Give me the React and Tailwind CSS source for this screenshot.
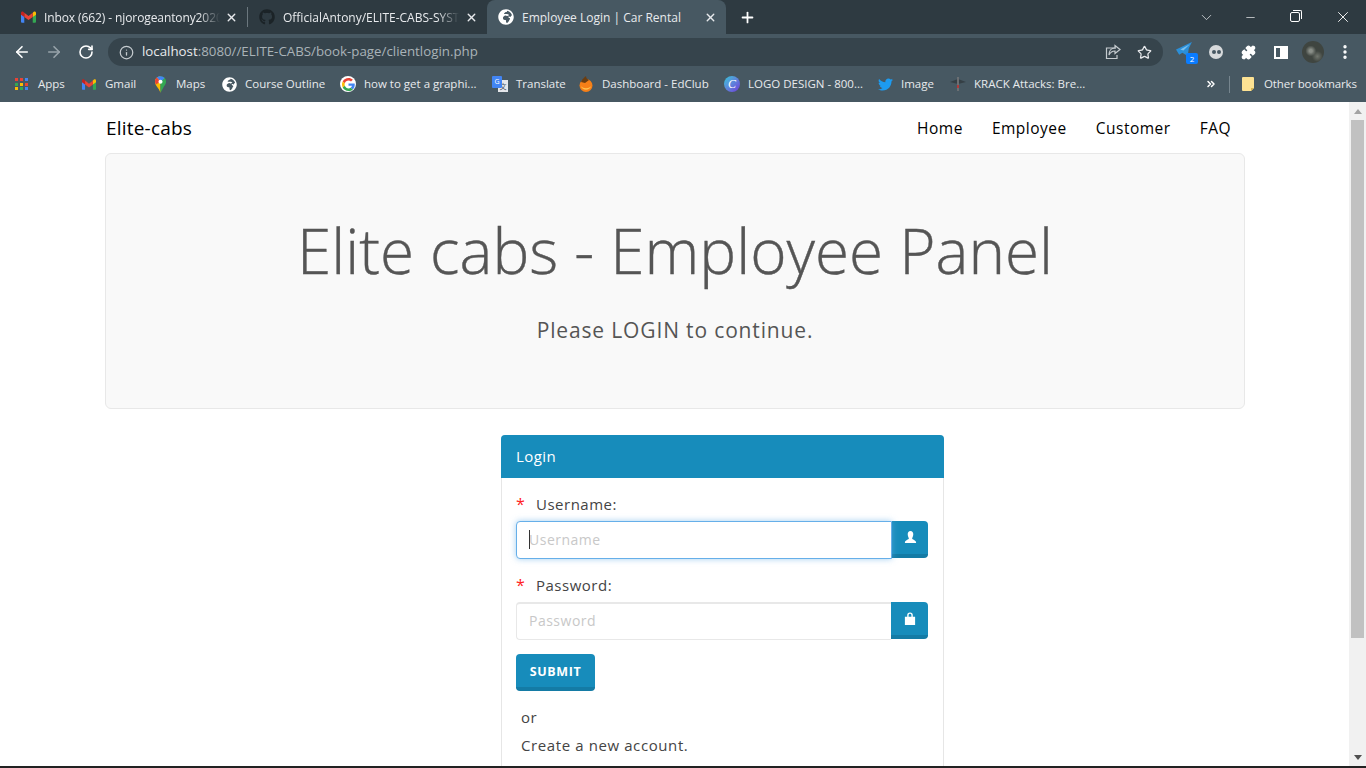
import React from 'react';
import { ArrowLeft, ArrowRight, RotateCw, Info, Star, X, Plus, ChevronDown, Minus, Puzzle, MoreVertical, ChevronsRight } from 'lucide-react';
import { FaGithub, FaTwitter, FaGlobeAfrica } from 'react-icons/fa';

const GmailIcon = ({ className }) => (
  <svg viewBox="0 0 16 12" className={className}>
    <path d="M0 2v9a1 1 0 0 0 1 1h2.5V5.500z" fill="#4285f4" />
    <path d="M16 2v9a1 1 0 0 1-1 1h-2.500V5.500z" fill="#34a853" />
    <path d="M12.500 1.500V6L16 3.500V1.600C16 .3 14.600-.4 13.600.4z" fill="#fbbc04" />
    <path d="M3.500 6V1.500L8 5l4.500-3.500V6L8 9.300z" fill="#ea4335" />
    <path d="M0 1.600v1.900L3.500 6V1.500L2.400.4C1.400-.4 0 .3 0 1.600z" fill="#c5221f" />
  </svg>
);

const GoogleIcon = () => (
  <span className="w-4 h-4 rounded-full bg-white flex items-center justify-center">
    <svg viewBox="0 0 48 48" className="w-[13px] h-[13px]">
      <path fill="#ea4335" d="M24 9.500c3.500 0 6.700 1.200 9.200 3.600l6.900-6.900C35.900 2.400 30.400 0 24 0 14.600 0 6.500 5.400 2.600 13.200l8 6.200C12.500 13.700 17.800 9.500 24 9.500z" />
      <path fill="#4285f4" d="M47 24.500c0-1.600-.1-3.100-.4-4.500H24v9h13c-.6 3-2.300 5.500-4.800 7.200l7.700 6C44.400 37.900 47 31.800 47 24.500z" />
      <path fill="#fbbc05" d="M10.500 28.600c-.5-1.400-.8-3-.8-4.600s.3-3.200.8-4.600l-8-6.200C.9 16.500 0 20.100 0 24s.9 7.500 2.600 10.800z" />
      <path fill="#34a853" d="M24 48c6.500 0 11.900-2.100 15.900-5.800l-7.700-6c-2.200 1.500-4.900 2.300-8.200 2.300-6.200 0-11.500-4.200-13.400-9.900l-8 6.200C6.500 42.600 14.600 48 24 48z" />
    </svg>
  </span>
);

const AppsIcon = () => {
  const colors = ['#ea4335', '#ea4335', '#4285f4', '#34a853', '#fbbc04', '#ea4335', '#fbbc04', '#34a853', '#4285f4'];
  return (
    <span className="grid grid-cols-3 gap-[1.5px] w-[13px]">
      {colors.map((c, i) => <span key={i} className="w-[3px] h-[3px]" style={{ backgroundColor: c }} />)}
    </span>
  );
};

const MapsIcon = () => (
  <svg viewBox="0 0 14 18" className="w-[13px] h-[17px]">
    <path d="M7 0a6 6 0 0 0-6 6c0 4 4 6 6 12z" fill="#fbbc04" />
    <path d="M7 0a6 6 0 0 1 6 6c0 1.500-.7 3-2 4.500L7 18z" fill="#34a853" />
    <path d="M3 1.400A6 6 0 0 1 7 0c2 0 3.500 1 4.500 2L7 6z" fill="#4285f4" />
    <path d="M1 6c0-1.800.8-3.500 2-4.600L7 6l-5 3z" fill="#ea4335" />
    <circle cx="7" cy="6" r="2.200" fill="#fff" />
  </svg>
);

const TranslateIcon = () => (
  <span className="relative w-4 h-4 block">
    <span className="absolute right-0 bottom-0 w-[10px] h-[12px] bg-gray-200 text-[7px] leading-[12px] text-center text-gray-600 font-['Noto_Sans_CJK_SC',sans-serif]">文</span>
    <span className="absolute left-0 top-0 w-[10px] h-[12px] rounded-[1px] bg-[#4285f4] text-[7px] leading-[12px] text-center text-white">G</span>
  </span>
);

const EdClubIcon = () => (
  <svg viewBox="0 0 16 16" className="w-4 h-4">
    <circle cx="8" cy="9.500" r="6.500" fill="#f57f17" />
    <path d="M3 6c1-3 3-4 5-6 0 2 1 3 3 4L7 7z" fill="#6b3d10" />
    <path d="M3 10c2 3 8 3 10 0-1 5-9 5-10 0z" fill="#ffc04d" />
  </svg>
);

const CanvaIcon = () => (
  <span className="w-4 h-4 rounded-full bg-gradient-to-br from-[#22c6d8] to-[#6a2fd8] flex items-center justify-center text-white text-[12px] italic leading-none font-['Liberation_Serif',serif]">C</span>
);

const KrackIcon = () => (
  <svg viewBox="0 0 16 16" className="w-4 h-4">
    <path d="M0 6l8-3 8 3-8 2z" fill="#353f45" />
    <rect x="7" y="1" width="2" height="14" fill="#6b6f73" />
    <rect x="7" y="9" width="2" height="3" fill="#b03a3a" />
  </svg>
);

const FolderIcon = () => (
  <svg viewBox="0 0 12 14" className="w-3 h-[14px]">
    <path d="M1 0h10a1 1 0 0 1 1 1v10l-3 3H1a1 1 0 0 1-1-1V1a1 1 0 0 1 1-1z" fill="#fde293" />
    <path d="M9 14v-3h3z" fill="#d9b650" />
  </svg>
);

// fixed widths so each bookmark lands where it does in the bar
const BOOKMARKS = [
  { label: 'Apps', icon: <AppsIcon />, cls: 'w-[67px]', gap: 'gap-[10px]' },
  { label: 'Gmail', icon: <GmailIcon className="w-[14px] h-[11px]" />, cls: 'w-[72px]', gap: 'gap-[9px]' },
  { label: 'Maps', icon: <MapsIcon />, cls: 'w-[68px]', gap: 'gap-[9px]' },
  { label: 'Course Outline', icon: <FaGlobeAfrica className="w-[15px] h-[15px] text-white" />, cls: 'w-[118px]', gap: 'gap-[8px]' },
  { label: 'how to get a graphi...', icon: <GoogleIcon />, cls: 'w-[152px]', gap: 'gap-[8px]' },
  { label: 'Translate', icon: <TranslateIcon />, cls: 'w-[86px]', gap: 'gap-[8px]' },
  { label: 'Dashboard - EdClub', icon: <EdClubIcon />, cls: 'w-[146px]', gap: 'gap-[8px]' },
  { label: 'LOGO DESIGN - 800...', icon: <CanvaIcon />, cls: 'w-[154px]', gap: 'gap-[8px]' },
  { label: 'Image', icon: <FaTwitter className="w-[15px] h-[15px] text-[#1d9bf0]" />, cls: 'w-[72px]', gap: 'gap-[8px]' },
  { label: 'KRACK Attacks: Bre...', icon: <KrackIcon />, cls: 'w-[258px]', gap: 'gap-[8px]' },
];

function Tab({ icon, title, active, cls, fade }) {
  return (
    <div className={`relative h-[34px] shrink-0 flex items-center ${cls} ${active ? 'bg-[#475862] rounded-t-lg' : ''}`}>
      {icon}
      <span className={`overflow-hidden whitespace-nowrap text-[12px] pt-px text-[#e8eaed] ${fade}`}>{title}</span>
      <X className="absolute right-[9px] top-[11px] w-[13px] h-[13px] text-[#e8eaed]" strokeWidth={2.5} />
    </div>
  );
}

function BrowserChrome() {
  return (
    <div className="shrink-0 font-['Open_Sans',sans-serif]">
      {/* Tab strip */}
      <div className="h-[34px] bg-[#2e3a41] flex items-center">
        <Tab
          cls="w-[247px] pl-[21px] gap-[8px]"
          fade="w-[176px] tracking-[-0.1px] [mask-image:linear-gradient(to_right,black_88%,transparent)]"
          title="Inbox (662) - njorogeantony20200"
          icon={<GmailIcon className="w-[15px] h-[12px] shrink-0" />}
        />
        <div className="w-px h-5 bg-[#6b777e]" />
        <Tab
          cls="w-[239px] pl-[11px] gap-[8px]"
          fade="w-[176px] [mask-image:linear-gradient(to_right,black_88%,transparent)]"
          title="OfficialAntony/ELITE-CABS-SYSTEM"
          icon={<FaGithub className="w-4 h-4 shrink-0 text-[#1b2327]" />}
        />
        <Tab
          active
          cls="w-[239px] pl-[11px] gap-[8px]"
          fade=""
          title="Employee Login | Car Rental"
          icon={<FaGlobeAfrica className="w-4 h-4 shrink-0 text-white" />}
        />
        <Plus className="w-[17px] h-[17px] text-white ml-[13px]" strokeWidth={2.5} />
        <div className="flex-1" />
        <ChevronDown className="w-[17px] h-[17px] text-[#d5d9dc] mr-[29px]" strokeWidth={1.2} />
        <Minus className="w-[13px] h-[13px] text-white mr-[33px]" strokeWidth={1.2} />
        <span className="relative block w-[10px] h-[10px] border border-white rounded-[2px] mr-[34px]">
          <span className="absolute -right-[3px] -top-[3px] w-[9px] h-[9px] border-t border-r border-white rounded-tr-[2px]" />
        </span>
        <X className="w-[18px] h-[18px] text-white mr-[14px]" strokeWidth={1.2} />
      </div>

      {/* Toolbar */}
      <div className="h-[36px] bg-[#475862] flex items-center">
        <ArrowLeft className="w-[18px] h-[18px] text-white ml-[13px]" strokeWidth={2.2} />
        <ArrowRight className="w-[18px] h-[18px] text-[#98a3aa] ml-[14px]" strokeWidth={2.2} />
        <RotateCw className="w-[16px] h-[16px] text-white ml-[15px]" strokeWidth={2.4} />
        <div className="ml-[14px] w-[1055px] h-[28px] rounded-full bg-[#36444c] flex items-center pl-[11px]">
          <Info className="w-[15px] h-[15px] text-[#c5cbcf]" strokeWidth={2} />
          <span className="ml-[8px] text-[13.3px] text-[#e8eaed] whitespace-nowrap">
            localhost<span className="text-[#aab3b8]">:8080//ELITE-CABS/book-page/clientlogin.php</span>
          </span>
          <div className="flex-1" />
          <svg viewBox="0 0 16 16" className="w-4 h-4 mr-[16px] fill-none stroke-[#c5cbcf] stroke-[1.2]">
            <path d="M11 4H1.500v10.500h10.500V11" />
            <path d="M15 5.500L10 1.500v2.500C6 4 4 7 4 11c1.500-3 3.500-4 6-4v2.500z" />
          </svg>
          <Star className="w-[15px] h-[15px] text-[#e8eaed] mr-[11px]" strokeWidth={2} />
        </div>
        {/* Extensions */}
        <div className="relative ml-[13px] w-[22px] h-[20px]">
          <svg viewBox="0 0 16 14" className="w-[17px] h-[15px]">
            <path d="M0 7l15-7-3 6-1 7-5-3-3 2z" fill="#2b8fd8" />
            <path d="M4 7l9-5-6 6z" fill="#7cc0ee" />
          </svg>
          <span className="absolute right-0 bottom-[-2px] w-[12px] h-[11px] rounded-[2px] bg-[#0a7cff] text-white text-[8px] leading-[11px] text-center">2</span>
        </div>
        <span className="ml-[11px] w-[14px] h-[14px] rounded-full bg-[#d7dadc] flex items-center justify-center gap-[1px]">
          <span className="w-[4px] h-[4px] rounded-full bg-[#475862]" />
          <span className="w-[4px] h-[4px] rounded-full bg-[#475862]" />
        </span>
        <Puzzle className="ml-[18px] w-[15px] h-[15px] text-white fill-white" />
        <span className="ml-[18px] w-[14px] h-[13px] border-2 border-white flex justify-end">
          <span className="w-[6px] h-full bg-white" />
        </span>
        <span className="ml-[14px] w-[22px] h-[22px] rounded-full bg-[#3f4540] bg-[radial-gradient(circle_at_40%_45%,#8a8f88_0,#8a8f88_8%,transparent_30%),radial-gradient(circle_at_70%_70%,#72776f_0,transparent_25%)]" />
        <MoreVertical className="ml-[12px] w-[18px] h-[18px] text-white" strokeWidth={2.5} />
      </div>

      {/* Bookmarks */}
      <div className="h-[32px] pb-[4px] bg-[#475862] flex items-center pl-[15px] text-[11.5px] text-[#e8eaed]">
        {BOOKMARKS.map((b) => (
          <div key={b.label} className={`flex items-center shrink-0 whitespace-nowrap ${b.cls} ${b.gap}`}>
            {b.icon}
            <span>{b.label}</span>
          </div>
        ))}
        <ChevronsRight className="w-[12px] h-[12px] text-white ml-[-3px]" strokeWidth={3} />
        <div className="w-px h-[17px] bg-[#76858e] ml-[12px]" />
        <div className="ml-[12px]"><FolderIcon /></div>
        <span className="ml-[10px] whitespace-nowrap tracking-[-0.1px]">Other bookmarks</span>
      </div>
    </div>
  );
}

function Scrollbar() {
  return (
    <div className="w-[17px] shrink-0 bg-[#f1f1f1] flex flex-col items-center">
      <div className="h-[18px] flex items-center justify-center">
        <div className="w-0 h-0 border-x-[4px] border-x-transparent border-b-[5px] border-b-[#a3a3a3]" />
      </div>
      <div className="w-[13px] h-[518px] bg-[#c1c1c1]" />
      <div className="flex-1" />
      <div className="h-[17px] flex items-center justify-center">
        <div className="w-0 h-0 border-x-[4px] border-x-transparent border-t-[5px] border-t-[#505050]" />
      </div>
    </div>
  );
}

function LoginField({ label, placeholder, icon, focused }) {
  return (
    <div className="mb-[15px]">
      <div className="h-[22px] flex items-center text-[15px] tracking-[0.5px] text-[#444]">
        <span className="text-[#f22] w-[20px] text-[16px]">*</span>
        {label}:
      </div>
      <div className="mt-[6px] flex h-[38px]">
        <div className={`relative flex-1 flex items-center pl-[12px] pb-[2px] bg-white rounded-l-[4px] text-[14px] tracking-[0.5px] text-[#c8c8c8] ${focused ? 'border border-[#66afe9] shadow-[0_0_6px_rgba(102,175,233,0.6)]' : 'border border-[#e8e8e8] border-r-0 border-t-2'}`}>
          {focused && <span className="absolute left-[12px] top-[8px] w-px h-[19px] bg-[#333]" />}
          {placeholder}
        </div>
        <div className={`h-[37px] flex items-center justify-center rounded-r-[4px] bg-[#178cbb] border-b-[4px] border-b-[#147ba5] text-white ${focused ? 'w-[36px]' : 'w-[37px]'}`}>
          {icon}
        </div>
      </div>
    </div>
  );
}

export default function App() {
  return (
    <div className="h-screen overflow-hidden flex flex-col bg-white">
      <BrowserChrome />
      <div className="flex-1 min-h-0 flex">
        <div className="flex-1 min-w-0 overflow-hidden font-['Open_Sans',sans-serif]">
          <div className="w-[1140px] ml-[105px]">
            {/* Navbar */}
            <nav className="h-[51px] pt-[2px] flex items-center justify-between text-black">
              <span className="text-[19px] tracking-[0.2px] ml-px">Elite-cabs</span>
              <ul className="flex gap-[29px] mr-[14px] text-[15.5px] tracking-[0.5px]">
                <li>Home</li>
                <li>Employee</li>
                <li>Customer</li>
                <li>FAQ</li>
              </ul>
            </nav>

            {/* Jumbotron */}
            <section className="h-[256px] bg-[#f9f9f9] border border-[#e8e8e8] rounded-[6px] flex flex-col items-center text-[#555]">
              <h1 className="mt-[52px] text-[62px] leading-[88px] font-light [-webkit-text-stroke:0.4px_#555]">Elite cabs - Employee Panel</h1>
              <p className="mt-[21px] text-[21px] leading-[30px] tracking-[0.85px]">Please LOGIN to continue.</p>
            </section>

            {/* Login panel */}
            <div className="w-[443px] mt-[26px] ml-[396px] h-[400px] border border-[#e6e6e6] rounded-t-[4px]">
              <div className="h-[43px] bg-[#178cbb] -mx-px -mt-px rounded-t-[4px] flex items-center pl-[15px] text-white text-[15px] tracking-[0.4px]">
                Login
              </div>
              <div className="pt-[15px] pl-[14px] pr-[15px]">
                <LoginField
                  focused
                  label="Username"
                  placeholder="Username"
                  icon={
                    <svg viewBox="0 0 14 14" className="w-[13px] h-[13px] fill-white">
                      <path d="M7 0c2 0 3 1.500 3 3.500S9 7 8.700 8c0 1 4.300 2 4.300 4v1H1v-1c0-2 4.300-3 4.300-4C5 7 4 5.500 4 3.500S5 0 7 0z" />
                    </svg>
                  }
                />
                <div className="-mb-px">
                  <LoginField
                    label="Password"
                    placeholder="Password"
                    icon={
                      <svg viewBox="0 0 12 14" className="w-[12px] h-[13px] fill-white">
                        <path d="M3 5V3.500a3 3 0 0 1 6 0V5h2.500v9H.500V5zm1.500 0h3V3.500a1.500 1.500 0 0 0-3 0z" />
                      </svg>
                    }
                  />
                </div>
                <button className="w-[79px] h-[37px] pt-[4px] rounded-[4px] bg-[#178cbb] border-b-[4px] border-b-[#147ba5] text-white text-[12.5px] font-bold tracking-[0.6px]">
                  SUBMIT
                </button>
                <div className="mt-[14px] ml-[5px] text-[15px] leading-[24px] tracking-[0.5px] text-[#444]">or</div>
                <div className="mt-[4px] ml-[5px] text-[15px] leading-[24px] tracking-[0.6px] text-[#444]">Create a new account.</div>
              </div>
            </div>
          </div>
        </div>
        <Scrollbar />
      </div>
      <div className="h-[2px] shrink-0 bg-[#222]" />
    </div>
  );
}
